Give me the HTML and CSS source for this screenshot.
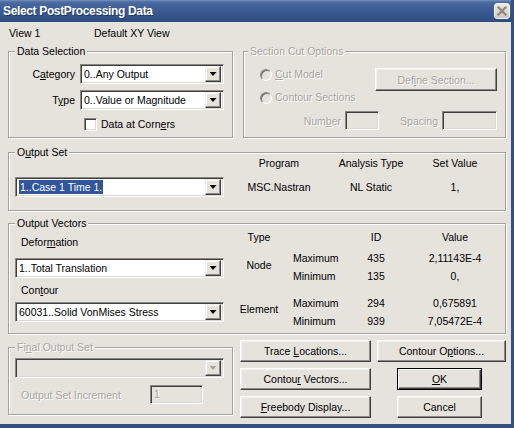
FILE: index.html
```html
<!DOCTYPE html>
<html lang="en">
<head>
    <meta charset="UTF-8">
    <title>Select PostProcessing Data</title>
    <link rel="stylesheet" href="styles.css">
</head>
<body>
    <div class="window">
        <div class="titlebar">
            <span class="title">Select PostProcessing Data</span>
            <span class="close-btn">
                <svg width="14" height="14" viewBox="0 0 14 14">
                    <path d="M3.5 3.5 L10.5 10.5 M10.5 3.5 L3.5 10.5" stroke="#8d887c" stroke-width="2.2" stroke-linecap="square"/>
                </svg>
            </span>
        </div>

        <div class="content">
            <div class="view-line"><span class="view-num">View 1</span><span>Default XY View</span></div>

            <div class="top-row">
                <div class="group data-sel">
                    <span class="legend">Data Selection</span>
                    <div class="sel-grid">
                        <span class="field-label">C<u>a</u>tegory</span>
                        <div class="combo combo-short"><span class="combo-text">0..Any Output</span><span class="drop"></span></div>
                        <span class="field-label">T<u>y</u>pe</span>
                        <div class="combo combo-short"><span class="combo-text">0..Value or Magnitude</span><span class="drop"></span></div>
                        <div class="check-row"><span class="checkbox"></span><span>Data at Corn<u>e</u>rs</span></div>
                    </div>
                </div>

                <div class="group section-cut disabled">
                    <span class="legend legend-cut">Section Cut Options</span>
                    <div class="cut-top">
                        <div class="radios">
                            <div class="radio-row"><span class="radio"></span><span><u>C</u>ut Model</span></div>
                            <div class="radio-row"><span class="radio"></span><span>Contour Sections</span></div>
                        </div>
                        <button class="btn define-btn">Def<u>i</u>ne Section...</button>
                    </div>
                    <div class="cut-bottom">
                        <span>Num<u>b</u>er</span>
                        <span class="textbox num-box"></span>
                        <span class="spacing-label">Spacing</span>
                        <span class="textbox spacing-box"></span>
                    </div>
                </div>
            </div>

            <div class="group output-set">
                <span class="legend">O<u>u</u>tput Set</span>
                <div class="set-grid">
                    <span></span>
                    <span class="col-head">Program</span>
                    <span class="col-head">Analysis Type</span>
                    <span class="col-head">Set Value</span>
                    <div class="combo combo-wide"><span class="combo-text"><span class="selected">1..Case 1 Time 1.</span></span><span class="drop"></span></div>
                    <span class="cell">MSC.Nastran</span>
                    <span class="cell">NL Static</span>
                    <span class="cell">1,</span>
                </div>
            </div>

            <div class="group output-vectors">
                <span class="legend">Output Vectors</span>
                <div class="vec-body">
                    <div class="vec-left">
                        <div class="vec-label">Defor<u>m</u>ation</div>
                        <div class="combo combo-wide deform-combo"><span class="combo-text">1..Total Translation</span><span class="drop"></span></div>
                        <div class="vec-label contour-label">Con<u>t</u>our</div>
                        <div class="combo combo-wide contour-combo"><span class="combo-text">60031..Solid VonMises Stress</span><span class="drop"></span></div>
                    </div>
                    <div class="vec-table">
                        <span class="th">Type</span>
                        <span></span>
                        <span class="th num">ID</span>
                        <span class="th num">Value</span>

                        <span class="type-label">Node</span>
                        <span class="mm">Maximum</span>
                        <span class="num">435</span>
                        <span class="num">2,11143E-4</span>
                        <span class="mm">Minimum</span>
                        <span class="num">135</span>
                        <span class="num">0,</span>

                        <span class="type-label type-element">Element</span>
                        <span class="mm">Maximum</span>
                        <span class="num">294</span>
                        <span class="num">0,675891</span>
                        <span class="mm">Minimum</span>
                        <span class="num">939</span>
                        <span class="num">7,05472E-4</span>
                    </div>
                </div>
            </div>

            <div class="bottom-row">
                <div class="group final-set disabled">
                    <span class="legend">Fi<u>n</u>al Output Set</span>
                    <div class="combo combo-wide combo-disabled final-combo"><span class="combo-text"></span><span class="drop"></span></div>
                    <div class="inc-row">
                        <span class="inc-label">Output Set Increment</span>
                        <span class="textbox inc-box">1</span>
                    </div>
                </div>

                <div class="buttons">
                    <button class="btn">Trace <u>L</u>ocations...</button>
                    <button class="btn">Contour O<u>p</u>tions...</button>
                    <button class="btn">Contou<u>r</u> Vectors...</button>
                    <button class="btn btn-small btn-default"><u>O</u>K</button>
                    <button class="btn"><u>F</u>reebody Display...</button>
                    <button class="btn btn-small">Cancel</button>
                </div>
            </div>
        </div>
    </div>
</body>
</html>
```

FILE: styles.css
```css
body {
    margin: 0;
    font-family: "Liberation Sans", Arial, sans-serif;
    font-size: 10.5px;
    color: #000;
    background: #e6e3dd;
}
.window {
    width: 514px;
    height: 428px;
    box-sizing: border-box;
    background: #e6e3dd;
    border-right: 3px solid #34507e;
    border-bottom: 4px solid #34507e;
    overflow: hidden;
}
.titlebar {
    height: 22px;
    display: flex;
    align-items: center;
    padding-left: 3px;
    background: linear-gradient(to bottom, #7591bd 0, #4b6ba1 2px, #3e5f96 8px, #34548b 16px, #2d4b80 22px);
}
.title {
    color: #fff;
    font-weight: bold;
    font-size: 12px;
    letter-spacing: -0.35px;
    text-shadow: 1px 1px 0 rgba(0, 0, 0, 0.35);
}
.close-btn {
    margin-left: auto;
    margin-right: 1px;
    width: 16px;
    height: 16px;
    box-sizing: border-box;
    border: 1px solid #f4f3ef;
    border-radius: 3px;
    background: linear-gradient(to bottom, #ece9e2, #cfcbc1);
    display: flex;
    align-items: center;
    justify-content: center;
}
.close-btn svg {
    display: block;
}
.content {
    padding: 5px 5px 0 8px;
}
.view-line {
    line-height: 13px;
    padding-left: 1px;
}
.view-num {
    display: inline-block;
    width: 85px;
}

/* group boxes */
.group {
    position: relative;
    box-sizing: border-box;
    border: 1px solid #a3a19b;
    box-shadow: inset 1px 1px 0 #fff, 1px 1px 0 #fff;
}
.legend {
    position: absolute;
    top: -7px;
    left: 6px;
    padding: 0 2px;
    line-height: 13px;
    background: #e6e3dd;
    white-space: nowrap;
}
.legend-cut {
    left: 4px;
}
.disabled {
    color: #a6a49e;
    text-shadow: 1px 1px 0 #fff;
}

.top-row {
    display: flex;
    gap: 10px;
    margin-top: 11px;
}
.data-sel {
    width: 225px;
    height: 87px;
}
.section-cut {
    width: 263px;
    height: 87px;
}

/* combos and boxes */
.combo {
    display: flex;
    align-items: center;
    height: 20px;
    box-sizing: border-box;
    padding: 2px;
    background: #fff;
    border: 1px solid;
    border-color: #8a8883 #fff #fff #8a8883;
    box-shadow: inset 1px 1px 0 #3f3f3f, inset -1px -1px 0 #dcd9d3;
}
.combo-short {
    width: 144px;
}
.combo-wide {
    width: 209px;
}
.combo-text {
    flex: 1;
    padding-left: 1px;
    line-height: 14px;
    white-space: nowrap;
    overflow: hidden;
}
.selected {
    background: #31569a;
    color: #fff;
    padding: 1px 1px;
}
.drop {
    width: 16px;
    height: 16px;
    box-sizing: border-box;
    background: #e6e3dd;
    border: 1px solid;
    border-color: #eeece8 #404040 #404040 #eeece8;
    box-shadow: inset -1px -1px 0 #8c8a85, inset 1px 1px 0 #fff;
    display: flex;
    align-items: center;
    justify-content: center;
}
.drop::after {
    content: "";
    width: 7px;
    height: 4px;
    background: #000;
    clip-path: polygon(0 0, 100% 0, 50% 100%);
}
.combo-disabled {
    background: #e6e3dd;
}
.combo-disabled .drop::after {
    background: #a6a49e;
}
.textbox {
    display: inline-block;
    height: 19px;
    box-sizing: border-box;
    background: #e6e3dd;
    border: 1px solid;
    border-color: #8a8883 #fff #fff #8a8883;
    box-shadow: inset 1px 1px 0 #3f3f3f, inset -1px -1px 0 #dcd9d3;
    line-height: 17px;
    padding-left: 3px;
}

/* data selection */
.sel-grid {
    display: grid;
    grid-template-columns: 58px 144px;
    grid-auto-rows: 20px;
    column-gap: 5px;
    row-gap: 6px;
    align-items: center;
    padding: 12px 0 0 8px;
}
.field-label {
    text-align: right;
}
.check-row {
    grid-column: 2;
    align-self: start;
    display: flex;
    align-items: center;
    gap: 4px;
    margin: 2px 0 0 4px;
    line-height: 13px;
}
.checkbox {
    width: 13px;
    height: 13px;
    box-sizing: border-box;
    background: #fff;
    border: 1px solid;
    border-color: #8a8883 #fff #fff #8a8883;
    box-shadow: inset 1px 1px 0 #3f3f3f, inset -1px -1px 0 #dcd9d3;
}

/* section cut */
.cut-top {
    display: flex;
    align-items: flex-start;
    padding: 16px 8px 0 16px;
}
.radios {
    display: flex;
    flex-direction: column;
    gap: 10px;
}
.radio-row {
    display: flex;
    align-items: center;
    gap: 3px;
    line-height: 13px;
}
.radio {
    width: 12px;
    height: 12px;
    box-sizing: border-box;
    border-radius: 50%;
    background: #e6e3dd;
    border: 1px solid;
    border-color: #8a8883 #fff #fff #8a8883;
    box-shadow: inset 1px 1px 0 #6a6863;
}
.section-cut .define-btn {
    margin-left: auto;
    width: 122px;
    height: 23px;
    color: #a6a49e;
    text-shadow: 1px 1px 0 #fff;
}
.cut-bottom {
    display: flex;
    align-items: center;
    justify-content: flex-end;
    gap: 4px;
    margin-top: 7px;
    padding-right: 8px;
}
.num-box {
    width: 34px;
}
.spacing-label {
    margin-left: 17px;
}
.spacing-box {
    width: 55px;
}

/* output set */
.output-set {
    margin-top: 14px;
    height: 59px;
}
.set-grid {
    display: grid;
    grid-template-columns: 219px 90px 94px 74px;
    grid-template-rows: 13px 20px;
    row-gap: 7px;
    align-items: center;
    padding: 4px 0 0 6px;
}
.col-head, .cell {
    text-align: center;
    line-height: 13px;
}

/* output vectors */
.output-vectors {
    margin-top: 12px;
    height: 111px;
}
.vec-body {
    display: flex;
}
.vec-left {
    width: 223px;
    padding: 12px 0 0 6px;
}
.vec-label {
    padding-left: 6px;
    line-height: 13px;
}
.deform-combo {
    margin-top: 9px;
}
.contour-label {
    margin-top: 6px;
}
.contour-combo {
    margin-top: 5px;
}
.vec-table {
    display: grid;
    grid-template-columns: 42px 66px 60px 98px;
    grid-template-rows: 14px 23px 18px 27px 18px;
    align-items: end;
    padding-top: 6px;
    line-height: 17px;
}
.th {
    line-height: 14px;
}
.vec-table .th:first-child {
    text-align: center;
}
.type-label {
    grid-row: span 2;
    align-self: center;
    text-align: center;
    padding-top: 1px;
}
.type-element {
    padding-top: 4px;
}
.mm {
    padding-left: 13px;
}
.num {
    text-align: center;
}

/* bottom */
.bottom-row {
    display: flex;
    align-items: flex-start;
    gap: 7px;
    margin-top: 6px;
}
.final-set {
    width: 225px;
    height: 68px;
    margin-top: 7px;
}
.final-combo {
    margin: 10px 0 0 6px;
}
.inc-row {
    display: flex;
    align-items: center;
    margin-top: 7px;
    padding-left: 12px;
}
.inc-label {
    width: 129px;
}
.inc-box {
    width: 53px;
}
.buttons {
    display: grid;
    grid-template-columns: 131px 129px;
    grid-auto-rows: 22px;
    column-gap: 6px;
    row-gap: 6px;
}
.btn {
    height: 22px;
    box-sizing: border-box;
    padding: 0;
    font: inherit;
    color: #000;
    background: #e6e3dd;
    border: 1px solid;
    border-color: #fff #404040 #404040 #fff;
    box-shadow: inset -1px -1px 0 #8c8a85, inset 1px 1px 0 #f2f0ec;
}
.btn-small {
    width: 85px;
    margin-left: 20px;
}
.btn-default {
    border: 1px solid #000;
    box-shadow: inset 1px 1px 0 #fff, inset -1px -1px 0 #404040, inset -2px -2px 0 #8c8a85;
}
```
